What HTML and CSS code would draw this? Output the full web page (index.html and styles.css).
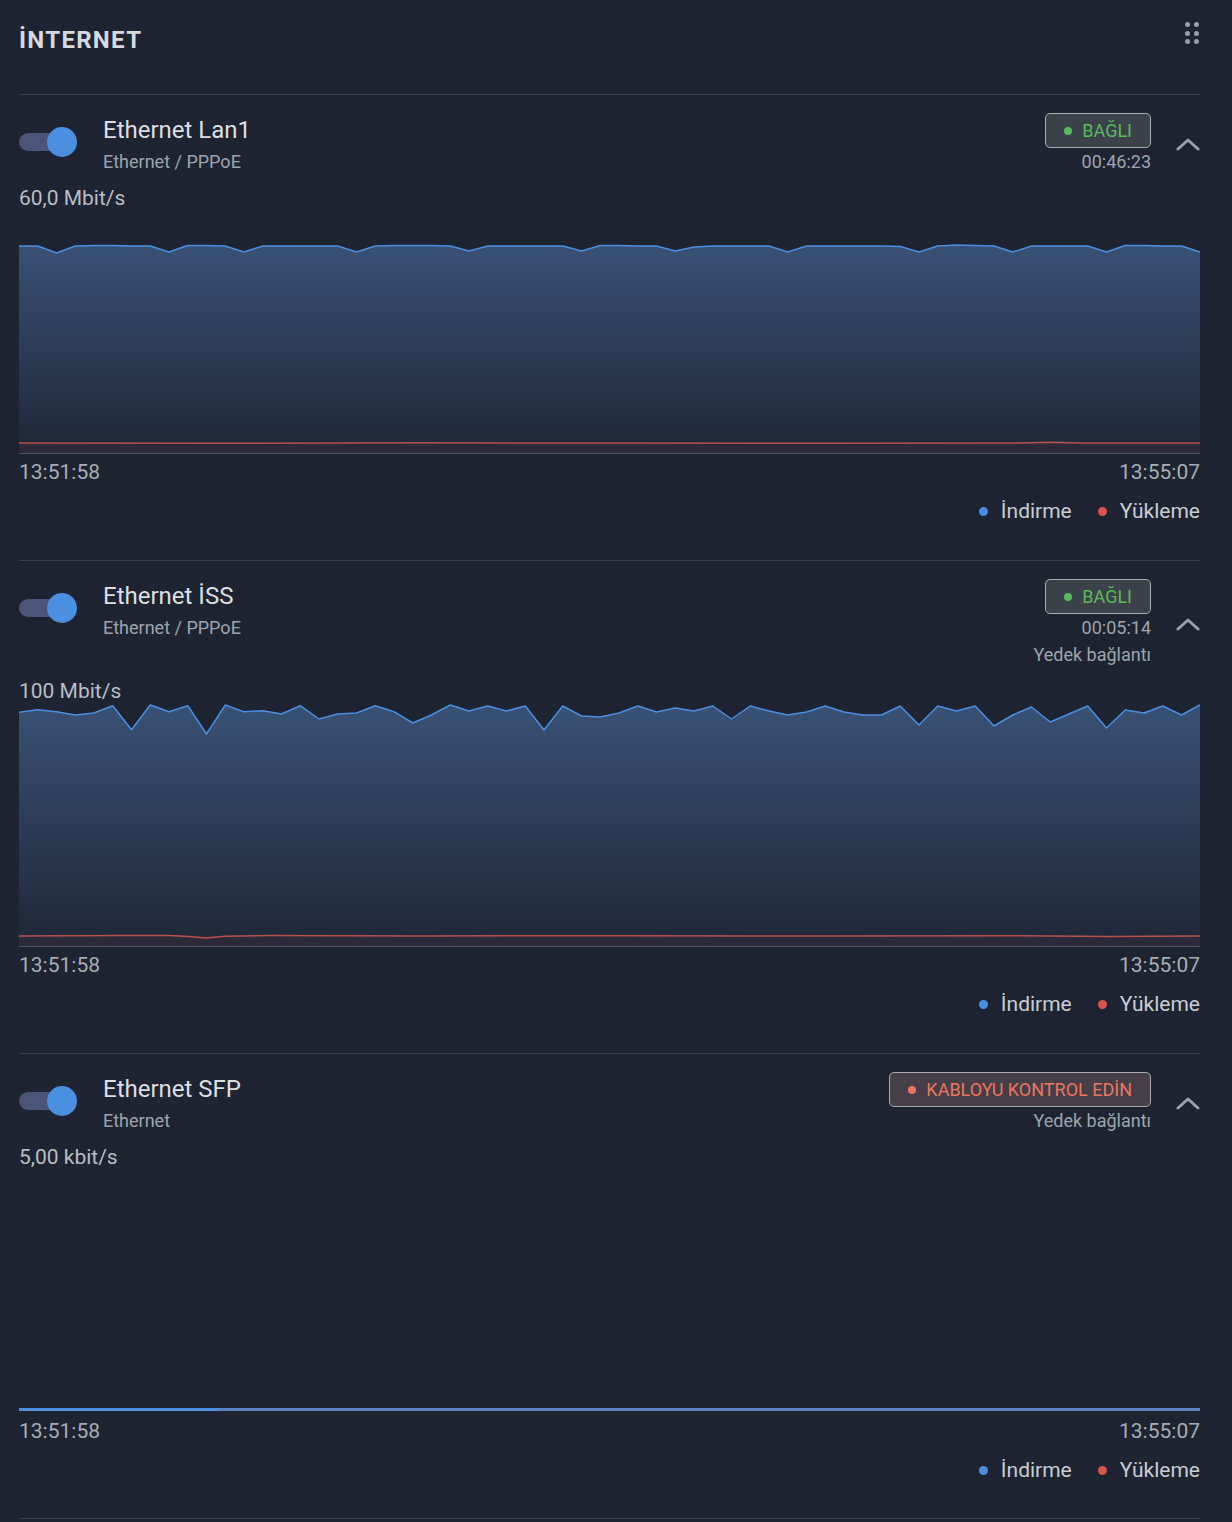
FILE: index.html
```html
<!DOCTYPE html>
<html lang="tr">
<head>
<meta charset="utf-8">
<title>İnternet</title>
<link rel="stylesheet" href="styles.css">
</head>
<body>
<div class="page">
  <div class="top">
    <h1>İNTERNET</h1>
    <div class="grip"><i></i><i></i><i></i><i></i><i></i><i></i></div>
  </div>

  <section class="card">
    <div class="head">
      <div class="toggle"><span class="track"></span><span class="thumb"></span></div>
      <div class="names">
        <div class="name">Ethernet Lan1</div>
        <div class="sub">Ethernet / PPPoE</div>
      </div>
      <div class="status">
        <div class="badge ok"><span class="dot"></span>BAĞLI</div>
        <div class="meta">00:46:23</div>
      </div>
      <svg class="chev" width="24" height="14" viewBox="0 0 24 14"><path d="M2 12 L12 3 L22 12" fill="none" stroke="#9ba1ab" stroke-width="3" stroke-linecap="round" stroke-linejoin="round"/></svg>
    </div>
    <div class="rate">60,0 Mbit/s</div>
    <div class="chart">
      <svg viewBox="0 0 1181 243" preserveAspectRatio="none">
        <defs>
          <linearGradient id="ga" x1="0" y1="0" x2="0" y2="1">
            <stop offset="0" stop-color="#3a5478" stop-opacity="0.95"/>
            <stop offset="1" stop-color="#1f2738" stop-opacity="0.9"/>
          </linearGradient>
        </defs>
        <polygon fill="url(#ga)" points="0,243 0,36 18.75,36 37.5,43 56.25,36 75,35.5 93.75,35.5 112.5,36 131.25,36 150,42 168.75,35.5 187.5,35.5 206.25,36 225,42 243.75,36 262.5,36 281.25,36 300,36 318.75,36 337.5,42 356.25,36 375,35.5 393.75,35.5 412.5,35.5 431.25,36 450,41 468.75,36 487.5,36 506.25,36 525,36 543.75,36 562.5,41 581.25,35.5 600,35.5 618.75,36 637.5,36 656.25,41 675,37 693.75,36 712.5,36 731.25,36 750,36 768.75,42 787.5,36 806.25,36 825,36 843.75,36 862.5,36 881.25,36.5 900,42 918.75,36 937.5,35 956.25,35.5 975,36 993.75,42 1012.5,36 1031.25,36 1050,36 1068.75,36 1087.5,42 1106.25,35.5 1125,35.5 1143.75,36 1162.5,36 1181,42 1181,243"/>
        <polyline fill="none" stroke="#4a8fe0" stroke-width="1.5" stroke-linejoin="round" points="0,36 18.75,36 37.5,43 56.25,36 75,35.5 93.75,35.5 112.5,36 131.25,36 150,42 168.75,35.5 187.5,35.5 206.25,36 225,42 243.75,36 262.5,36 281.25,36 300,36 318.75,36 337.5,42 356.25,36 375,35.5 393.75,35.5 412.5,35.5 431.25,36 450,41 468.75,36 487.5,36 506.25,36 525,36 543.75,36 562.5,41 581.25,35.5 600,35.5 618.75,36 637.5,36 656.25,41 675,37 693.75,36 712.5,36 731.25,36 750,36 768.75,42 787.5,36 806.25,36 825,36 843.75,36 862.5,36 881.25,36.5 900,42 918.75,36 937.5,35 956.25,35.5 975,36 993.75,42 1012.5,36 1031.25,36 1050,36 1068.75,36 1087.5,42 1106.25,35.5 1125,35.5 1143.75,36 1162.5,36 1181,42"/>
        <rect x="0" y="233" width="1181" height="10" fill="#c0504d" fill-opacity="0.08"/>
        <polyline fill="none" stroke="#b9504e" stroke-width="1.5" points="0,233 200,233.3 400,232.8 600,233 800,233.2 1000,232.9 1030,232.3 1060,233 1181,233"/>
      </svg>
    </div>
    <div class="axis"><span>13:51:58</span><span>13:55:07</span></div>
    <div class="legend"><span class="lg"><i class="ld blue"></i>İndirme</span><span class="lg"><i class="ld red"></i>Yükleme</span></div>
  </section>

  <section class="card">
    <div class="head">
      <div class="toggle"><span class="track"></span><span class="thumb"></span></div>
      <div class="names">
        <div class="name">Ethernet İSS</div>
        <div class="sub">Ethernet / PPPoE</div>
      </div>
      <div class="status">
        <div class="badge ok"><span class="dot"></span>BAĞLI</div>
        <div class="meta">00:05:14</div>
        <div class="meta">Yedek bağlantı</div>
      </div>
      <svg class="chev" width="24" height="14" viewBox="0 0 24 14"><path d="M2 12 L12 3 L22 12" fill="none" stroke="#9ba1ab" stroke-width="3" stroke-linecap="round" stroke-linejoin="round"/></svg>
    </div>
    <div class="rate">100 Mbit/s</div>
    <div class="chart">
      <svg viewBox="0 0 1181 243" preserveAspectRatio="none">
        <defs>
          <linearGradient id="gb" x1="0" y1="0" x2="0" y2="1">
            <stop offset="0" stop-color="#3a5478" stop-opacity="0.95"/>
            <stop offset="1" stop-color="#1f2738" stop-opacity="0.9"/>
          </linearGradient>
        </defs>
        <polygon fill="url(#gb)" points="0,243 0,9.3 18.75,6.7 37.5,8.7 56.25,12 75,10 93.75,2.7 112.5,26.7 131.25,2 150,8.7 168.75,2.7 187.5,31 206.25,2 225,8.7 243.75,7.7 262.5,11 281.25,2.7 300,16 318.75,11 337.5,10 356.25,2.7 375,8.7 393.75,20 412.5,12 431.25,2 450,8 468.75,3 487.5,8 506.25,3 525,27 543.75,3 562.5,13 581.25,14 600,10 618.75,3 637.5,9 656.25,5 675,8 693.75,3 712.5,16 731.25,3 750,8 768.75,12 787.5,9 806.25,3 825,9 843.75,12 862.5,12 881.25,3 900,22 918.75,3 937.5,8 956.25,3 975,23 993.75,12 1012.5,4 1031.25,19 1050,11 1068.75,3 1087.5,25 1106.25,7 1125,10 1143.75,3 1162.5,12 1181,2 1181,243"/>
        <polyline fill="none" stroke="#4a8fe0" stroke-width="1.5" stroke-linejoin="round" points="0,9.3 18.75,6.7 37.5,8.7 56.25,12 75,10 93.75,2.7 112.5,26.7 131.25,2 150,8.7 168.75,2.7 187.5,31 206.25,2 225,8.7 243.75,7.7 262.5,11 281.25,2.7 300,16 318.75,11 337.5,10 356.25,2.7 375,8.7 393.75,20 412.5,12 431.25,2 450,8 468.75,3 487.5,8 506.25,3 525,27 543.75,3 562.5,13 581.25,14 600,10 618.75,3 637.5,9 656.25,5 675,8 693.75,3 712.5,16 731.25,3 750,8 768.75,12 787.5,9 806.25,3 825,9 843.75,12 862.5,12 881.25,3 900,22 918.75,3 937.5,8 956.25,3 975,23 993.75,12 1012.5,4 1031.25,19 1050,11 1068.75,3 1087.5,25 1106.25,7 1125,10 1143.75,3 1162.5,12 1181,2"/>
        <rect x="0" y="233" width="1181" height="10" fill="#c0504d" fill-opacity="0.08"/>
        <polyline fill="none" stroke="#b9504e" stroke-width="1.5" points="0,233 100,232.6 150,232.4 170,233.4 187,235 206,233.2 250,232.6 400,233 600,232.7 800,233 1000,232.8 1090,233.4 1181,233"/>
      </svg>
    </div>
    <div class="axis"><span>13:51:58</span><span>13:55:07</span></div>
    <div class="legend"><span class="lg"><i class="ld blue"></i>İndirme</span><span class="lg"><i class="ld red"></i>Yükleme</span></div>
  </section>

  <section class="card">
    <div class="head">
      <div class="toggle"><span class="track"></span><span class="thumb"></span></div>
      <div class="names">
        <div class="name">Ethernet SFP</div>
        <div class="sub">Ethernet</div>
      </div>
      <div class="status">
        <div class="badge err"><span class="dot"></span>KABLOYU KONTROL EDİN</div>
        <div class="meta">Yedek bağlantı</div>
      </div>
      <svg class="chev" width="24" height="14" viewBox="0 0 24 14"><path d="M2 12 L12 3 L22 12" fill="none" stroke="#9ba1ab" stroke-width="3" stroke-linecap="round" stroke-linejoin="round"/></svg>
    </div>
    <div class="rate">5,00 kbit/s</div>
    <div class="chart empty">
      <svg viewBox="0 0 1181 243" preserveAspectRatio="none">
        <line x1="0" y1="240.5" x2="200" y2="240.5" stroke="#4a8fe0" stroke-width="3"/>
        <line x1="200" y1="240.5" x2="1181" y2="240.5" stroke="#5a82bf" stroke-width="3"/>
      </svg>
    </div>
    <div class="axis"><span>13:51:58</span><span>13:55:07</span></div>
    <div class="legend"><span class="lg"><i class="ld blue"></i>İndirme</span><span class="lg"><i class="ld red"></i>Yükleme</span></div>
  </section>
</div>
</body>
</html>
```

FILE: styles.css
```css
* { box-sizing: border-box; }
html, body { margin: 0; padding: 0; }
body {
  background: #1e2432;
  font-family: Roboto, "Liberation Sans", sans-serif;
  color: #d3d7de;
  width: 1232px;
}
.page { padding: 0 32px 0 19px; }

.top {
  height: 94px;
  display: flex;
  justify-content: space-between;
  align-items: flex-start;
}
.top h1 {
  margin: 25px 0 0;
  font-size: 24px;
  line-height: 30px;
  font-weight: 700;
  letter-spacing: 1.3px;
  color: #d6dae0;
}
.grip {
  margin-top: 22px;
  margin-right: 1px;
  display: grid;
  grid-template-columns: 5px 5px;
  column-gap: 4px;
  row-gap: 3.5px;
}
.grip i {
  display: block;
  width: 5px;
  height: 5px;
  border-radius: 50%;
  background: #9aa0ab;
}

.card {
  border-top: 1px solid #3a404b;
  padding: 18px 0 37px;
}
.card:last-child { border-bottom: 1px solid #3a404b; padding-bottom: 36px; }

.head { display: flex; align-items: flex-start; }
.toggle {
  position: relative;
  width: 58px;
  height: 30px;
  margin-top: 14px;
  margin-right: 26px;
  flex: none;
}
.track {
  position: absolute;
  left: 0;
  top: 6px;
  width: 46px;
  height: 18px;
  border-radius: 9px;
  background: #4a5577;
}
.thumb {
  position: absolute;
  right: 0;
  top: 0;
  width: 30px;
  height: 30px;
  border-radius: 50%;
  background: #4a8fe0;
}
.names { flex: 1; }
.name { font-size: 24px; line-height: 35px; color: #dcdfe4; }
.sub { font-size: 18px; line-height: 27px; color: #9ea4ae; }

.status { display: flex; flex-direction: column; align-items: flex-end; }
.badge {
  height: 35px;
  border: 1px solid #a7acb4;
  border-radius: 5px;
  background: #3c4249;
  padding: 0 18px;
  display: flex;
  align-items: center;
  gap: 10px;
  font-size: 18px;
}
.badge.ok { color: #5cb85c; }
.badge.err { color: #ec7660; background: #463f47; }
.dot { width: 8px; height: 8px; border-radius: 50%; background: currentColor; }
.meta { font-size: 18px; line-height: 27px; color: #9ea4ae; }
.chev { margin-left: 25px; flex: none; align-self: center; }

.rate {
  margin-top: 11px;
  font-size: 21px;
  line-height: 24px;
  color: #b9bec6;
}
.chart {
  height: 244px;
  border-bottom: 1px solid #4e5460;
}
.chart.empty { border-bottom: 0; }
.chart svg { display: block; width: 100%; height: 243px; }

.axis {
  display: flex;
  justify-content: space-between;
  margin-top: 6px;
  font-size: 21px;
  line-height: 24px;
  color: #a8adb5;
}
.legend {
  display: flex;
  justify-content: flex-end;
  gap: 26px;
  margin-top: 15px;
  font-size: 21px;
  line-height: 24px;
  color: #c9cdd4;
}
.lg { display: flex; align-items: center; gap: 13px; }
.ld { display: block; width: 9px; height: 9px; border-radius: 50%; }
.ld.blue { background: #4a8fe0; }
.ld.red { background: #d9534f; }
```
